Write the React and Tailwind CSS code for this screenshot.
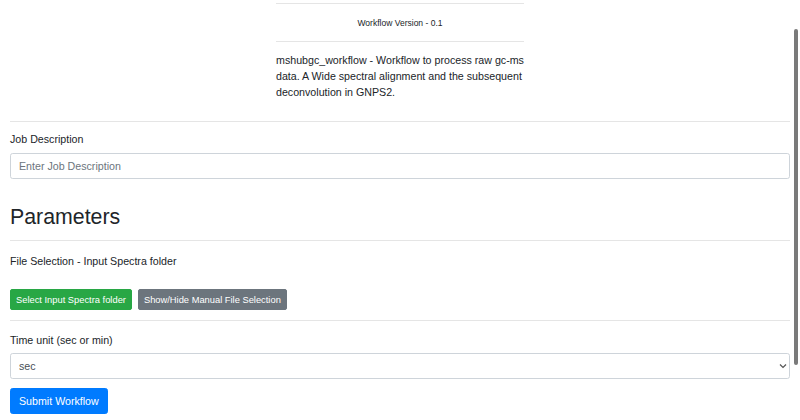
import React from "react";

export default function App() {
  return (
    <div
      className="relative w-[800px] h-[420px] overflow-hidden bg-white text-[#212529]"
      style={{ fontFamily: '"Liberation Sans", Arial, sans-serif' }}
    >
      <div className="flex flex-col px-[10px]">
        {/* centered header column */}
        <div className="mx-auto flex w-[248px] flex-col">
          <div className="mt-[3px] border-t border-[#e5e5e5]" />
          <div className="mt-[13px] text-center text-[8.53px] leading-[12.8px]">
            Workflow Version - 0.1
          </div>
          <div className="mt-[11px] border-t border-[#e5e5e5]" />
          <p className="mt-[10px] text-[10.667px] leading-[16px]">
            mshubgc_workflow - Workflow to process raw gc-ms data. A Wide spectral alignment and the subsequent
            deconvolution in GNPS2.
          </p>
        </div>

        <div className="mt-[21px] border-t border-[#e5e5e5]" />

        <label className="mt-[9px] text-[10.667px] leading-[16px]">Job Description</label>
        <input
          type="text"
          placeholder="Enter Job Description"
          className="mt-[6px] h-[26px] w-full rounded-[2.67px] border border-[#ced4da] bg-white px-[8px] text-[10.667px] leading-[16px] text-[#495057] outline-none placeholder:text-[#6c757d]"
          style={{ fontFamily: '"Liberation Sans", Arial, sans-serif' }}
        />

        <h2 className="mt-[26px] text-[21.33px] leading-[25.6px] font-normal">Parameters</h2>

        <div className="mt-[10px] border-t border-[#e5e5e5]" />

        <div className="mt-[12px] text-[10.667px] leading-[16px]">File Selection - Input Spectra folder</div>

        <div className="mt-[20px] flex gap-[6px]">
          <button className="flex h-[21px] items-center rounded-[2px] border border-[#28a745] bg-[#28a745] px-[5px] text-[9.33px] leading-[14px] text-white">
            Select Input Spectra folder
          </button>
          <button className="flex h-[21px] items-center rounded-[2px] border border-[#6c757d] bg-[#6c757d] px-[5px] text-[9.33px] leading-[14px] text-white">
            Show/Hide Manual File Selection
          </button>
        </div>

        <div className="mt-[10px] border-t border-[#e5e5e5]" />

        <label className="mt-[11px] text-[10.667px] leading-[16px]">Time unit (sec or min)</label>
        <div className="relative mt-[5px]">
          <select
            className="h-[26px] w-full appearance-none rounded-[2.67px] border border-[#ced4da] bg-white px-[8px] text-[10.667px] leading-[16px] text-[#495057] outline-none"
            style={{ fontFamily: '"Liberation Sans", Arial, sans-serif' }}
            defaultValue="sec"
          >
            <option value="sec">sec</option>
            <option value="min">min</option>
          </select>
          <svg
            className="pointer-events-none absolute right-[3px] top-[10px]"
            width="8"
            height="6"
            viewBox="0 0 8 6"
            fill="none"
          >
            <path d="M1 1.5 L4 4.5 L7 1.5" stroke="#555" strokeWidth="1.2" />
          </svg>
        </div>

        <div className="mt-[9px]">
          <button className="h-[26px] rounded-[2.67px] border border-[#007bff] bg-[#007bff] px-[8px] text-[10.667px] leading-[16px] text-white">
            Submit Workflow
          </button>
        </div>
      </div>

      {/* overlay scrollbar */}
      <div className="absolute right-[2px] top-[29px] h-[336px] w-[4px] rounded-full bg-[#7a7a7a]" />
    </div>
  );
}
